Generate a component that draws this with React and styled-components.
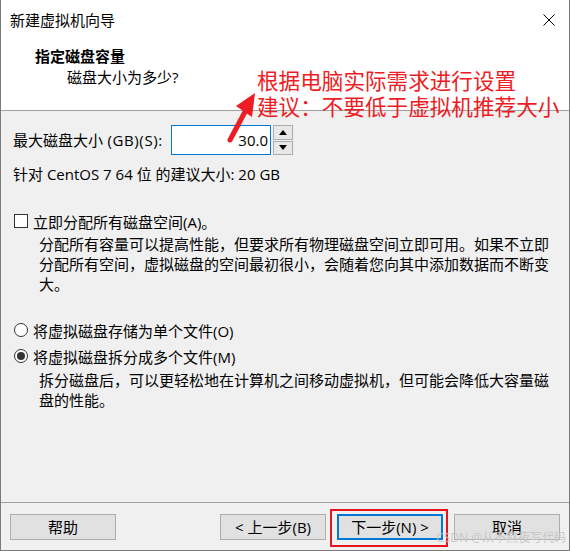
import React from "react"
import styled, { createGlobalStyle } from "styled-components"

const GlobalStyle = createGlobalStyle`
  html, body {
    margin: 0;
    padding: 0;
    background: #ffffff;
  }
  body {
    font-family: "Open Sans", "Noto Sans CJK SC", sans-serif;
    font-size: 15px;
    color: #000;
  }
`

const font = `"Open Sans", "Noto Sans CJK SC", sans-serif`

const Window = styled.div`
  position: relative;
  width: 570px;
  height: 551px;
  box-sizing: border-box;
  border: 1px solid #7a7a7a;
  border-top: none;
  display: flex;
  flex-direction: column;
  background: #f0f0f0;
  overflow: hidden;
`

const Top = styled.div`
  position: relative;
  height: 111px;
  box-sizing: border-box;
  background: #ffffff;
  border-bottom: 1px solid #a0a0a0;
`

const TitleBar = styled.div`
  height: 40px;
  display: flex;
  align-items: center;
  justify-content: space-between;
  padding: 0 14px 0 9px;
`

const Title = styled.div`
  font-family: ${font};
  font-size: 15px;
  line-height: 20px;
`

const CloseIcon = () => (
  <svg width="12" height="12" viewBox="0 0 12 12">
    <path d="M0.5 0.5 L11.5 11.5 M11.5 0.5 L0.5 11.5" stroke="#000" strokeWidth="1" />
  </svg>
)

const Header = styled.div`
  padding: 6px 0 0 34px;
`

const HeaderTitle = styled.div`
  font-weight: bold;
  font-size: 15px;
  line-height: 21px;
`

const HeaderSub = styled.div`
  font-size: 15px;
  line-height: 21px;
  padding-left: 32px;
`

const Annotation = styled.div`
  position: absolute;
  left: 256px;
  top: 68px;
  font-family: ${font};
  font-size: 21.6px;
  line-height: 26px;
  color: #ee1c25;
  white-space: nowrap;
`

const ArrowSvg = styled.svg`
  position: absolute;
  left: 220px;
  top: 88px;
`

const Body = styled.div`
  flex: 1;
  padding: 14px 0 0 12px;
  display: flex;
  flex-direction: column;
`

const SizeRow = styled.div`
  display: flex;
  align-items: center;
  height: 30px;
`

const SizeLabel = styled.div`
  width: 158px;
  line-height: 20px;
`

const Latin = styled.span`
  letter-spacing: 0.6px;
`

const SizeInput = styled.div`
  width: 100px;
  height: 30px;
  box-sizing: border-box;
  border: 1px solid #0078d7;
  background: #fff;
  display: flex;
  align-items: center;
  justify-content: flex-end;
  padding-right: 2px;
`

const Spinner = styled.div`
  margin-left: 2px;
  width: 20px;
  height: 30px;
  display: flex;
  flex-direction: column;
  gap: 1px;
`

const SpinButton = styled.div`
  flex: 1;
  border: 1px solid #adadad;
  background: #e8e8e8;
  display: flex;
  align-items: center;
  justify-content: center;
`

const Text = styled.div`
  margin-top: ${(p) => p.$mt || 0}px;
  padding-left: ${(p) => p.$indent || 0}px;
  line-height: 20px;
  white-space: nowrap;
`

const OptionRow = styled.label`
  display: flex;
  align-items: center;
  gap: 5px;
  height: 20px;
  margin-top: ${(p) => p.$mt}px;
`

const CheckBox = styled.span`
  width: 14px;
  height: 14px;
  box-sizing: border-box;
  border: 1px solid #333;
  background: #fff;
  margin-left: 1px;
`

const Radio = styled.span`
  width: 14px;
  height: 14px;
  box-sizing: border-box;
  border: 1px solid #333;
  border-radius: 50%;
  background: #fff;
  margin-left: 1px;
  display: flex;
  align-items: center;
  justify-content: center;
  &::after {
    content: "";
    width: 8px;
    height: 8px;
    border-radius: 50%;
    background: ${(p) => (p.$checked ? "#333" : "transparent")};
  }
`

const Footer = styled.div`
  position: relative;
  height: 48px;
  box-sizing: border-box;
  border-top: 1px solid #a0a0a0;
  display: flex;
  align-items: flex-start;
  padding: 11px 0 0 9px;
`

const Button = styled.div`
  position: relative;
  width: 106px;
  height: 26px;
  box-sizing: border-box;
  border: ${(p) => (p.$default ? "2px solid #0078d7" : "1px solid #adadad")};
  background: #e1e1e1;
  display: flex;
  align-items: center;
  justify-content: center;
  line-height: 20px;
  margin-left: ${(p) => p.$ml || 0}px;

  ${(p) =>
    p.$marked &&
    `
    &::after {
      content: "";
      position: absolute;
      left: -9px;
      right: -7px;
      top: -7px;
      bottom: -9px;
      border: 2px solid #e8141c;
    }
  `}
`

const Watermark = styled.div`
  position: absolute;
  right: 3px;
  bottom: 4px;
  font-family: ${font};
  font-size: 12px;
  color: rgba(150, 150, 150, 0.55);
  text-shadow: 0 0 1px rgba(255, 255, 255, 0.8);
  white-space: nowrap;
`

const Triangle = ({ up }) => (
  <svg width="8" height="5" viewBox="0 0 8 5">
    <path d={up ? "M0 5 L4 0 L8 5 Z" : "M0 0 L8 0 L4 5 Z"} fill="#000" />
  </svg>
)

export default function App() {
  return (
    <>
      <GlobalStyle />
      <Window>
        <Top>
          <TitleBar>
            <Title>新建虚拟机向导</Title>
            <CloseIcon />
          </TitleBar>
          <Header>
            <HeaderTitle>指定磁盘容量</HeaderTitle>
            <HeaderSub>磁盘大小为多少?</HeaderSub>
          </Header>
          <Annotation>
            根据电脑实际需求进行设置
            <br />
            建议：不要低于虚拟机推荐大小
          </Annotation>
        </Top>
        <ArrowSvg width="44" height="60" viewBox="0 0 44 60">
          <path d="M9 52 L25 22" stroke="#ee1c25" strokeWidth="5" strokeLinecap="round" />
          <path d="M15 18 L34 5 L31 29 Z" fill="#ee1c25" />
        </ArrowSvg>
        <Body>
          <SizeRow>
            <SizeLabel>
              最大磁盘大小<Latin> (GB)(S):</Latin>
            </SizeLabel>
            <SizeInput>30.0</SizeInput>
            <Spinner>
              <SpinButton>
                <Triangle up />
              </SpinButton>
              <SpinButton>
                <Triangle />
              </SpinButton>
            </Spinner>
          </SizeRow>
          <Text $mt={9}>针对 CentOS 7 64 位 的建议大小: 20 GB</Text>

          <OptionRow $mt={27}>
            <CheckBox />
            <span>立即分配所有磁盘空间(A)。</span>
          </OptionRow>
          <Text $mt={3} $indent={26}>
            分配所有容量可以提高性能，但要求所有物理磁盘空间立即可用。如果不立即
            <br />
            分配所有空间，虚拟磁盘的空间最初很小，会随着您向其中添加数据而不断变
            <br />
            大。
          </Text>

          <OptionRow $mt={26}>
            <Radio />
            <span>将虚拟磁盘存储为单个文件(O)</span>
          </OptionRow>
          <OptionRow $mt={6}>
            <Radio $checked />
            <span>将虚拟磁盘拆分成多个文件(M)</span>
          </OptionRow>
          <Text $mt={4} $indent={26}>
            拆分磁盘后，可以更轻松地在计算机之间移动虚拟机，但可能会降低大容量磁
            <br />
            盘的性能。
          </Text>
        </Body>
        <Footer>
          <Button>帮助</Button>
          <Button $ml={104}>&lt; 上一步(B)</Button>
          <Button $ml={11} $default $marked>
            下一步(N) &gt;
          </Button>
          <Button $ml={11}>取消</Button>
          <Watermark>CSDN @从不熬夜写代码</Watermark>
        </Footer>
      </Window>
    </>
  )
}
